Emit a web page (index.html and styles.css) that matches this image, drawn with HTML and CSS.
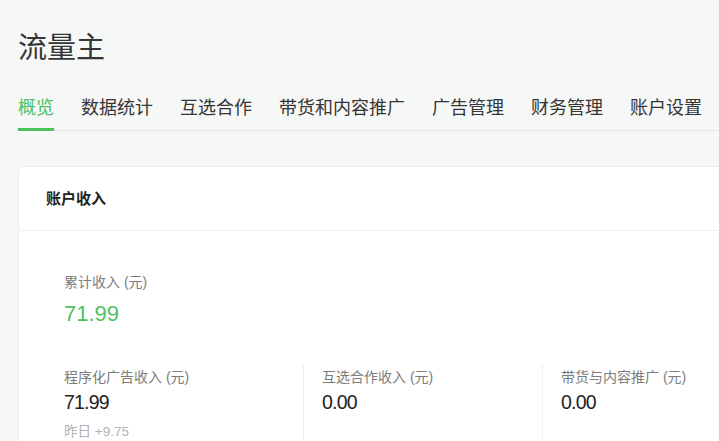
FILE: index.html
```html
<!DOCTYPE html>
<html lang="zh-CN">
<head>
<meta charset="utf-8">
<title>流量主</title>
<link rel="stylesheet" href="styles.css">
</head>
<body>
<div class="page">
  <h1 class="title">流量主</h1>
  <nav class="tabs">
    <a class="tab active">概览</a>
    <a class="tab">数据统计</a>
    <a class="tab">互选合作</a>
    <a class="tab">带货和内容推广</a>
    <a class="tab">广告管理</a>
    <a class="tab">财务管理</a>
    <a class="tab">账户设置</a>
  </nav>
  <section class="card">
    <div class="card-head">账户收入</div>
    <div class="card-body">
      <div class="total">
        <div class="label">累计收入 (元)</div>
        <div class="total-value">71.99</div>
      </div>
      <div class="cols">
        <div class="col">
          <div class="label">程序化广告收入 (元)</div>
          <div class="value">71.99</div>
          <div class="sub">昨日 +9.75</div>
        </div>
        <div class="col">
          <div class="label">互选合作收入 (元)</div>
          <div class="value">0.00</div>
        </div>
        <div class="col">
          <div class="label">带货与内容推广 (元)</div>
          <div class="value">0.00</div>
        </div>
      </div>
    </div>
  </section>
</div>
</body>
</html>
```
FILE: styles.css
```css
html, body {
  margin: 0;
  padding: 0;
  overflow: hidden;
  background: #f6f7f7;
}
body {
  font-family: "Liberation Sans", "Noto Sans CJK SC", sans-serif;
  color: #353535;
}
.page {
  width: 800px;
  padding: 28px 0 0 18px;
}
.title {
  margin: 0;
  font-size: 29px;
  line-height: 40px;
  font-weight: normal;
  color: #353535;
}
.tabs {
  margin-top: 28px;
  display: flex;
  gap: 27px;
  border-bottom: 1px solid #e4e6e6;
}
.tab {
  font-size: 18px;
  line-height: 24px;
  padding-bottom: 8px;
  border-bottom: 3px solid transparent;
  margin-bottom: -1px;
  color: #353535;
  white-space: nowrap;
}
.tab.active {
  color: #4fc15e;
  border-bottom-color: #4fc15e;
}
.card {
  margin-top: 35px;
  background: #fff;
  border: 1px solid #eeefef;
  border-radius: 4px;
}
.card-head {
  height: 63px;
  line-height: 63px;
  padding-left: 27px;
  font-size: 15px;
  font-weight: bold;
  color: #222;
  border-bottom: 1px solid #eeefef;
}
.card-body {
  padding: 41px 0 0 45px;
}
.label {
  font-size: 14px;
  line-height: 20px;
  color: #7c7c7c;
}
.total-value {
  margin-top: 7px;
  font-size: 22px;
  line-height: 30px;
  color: #4fc15e;
}
.cols {
  margin-top: 35px;
  display: grid;
  grid-template-columns: 239px 239px 239px;
}
.col {
  padding: 3px 0 2px 18px;
  border-left: 1px solid #eeefef;
  min-height: 80px;
}
.col:first-child {
  border-left: none;
  padding-left: 0;
}
.value {
  margin-top: 1px;
  font-size: 19.5px;
  line-height: 28px;
  letter-spacing: -0.8px;
  color: #222;
}
.sub {
  margin-top: 6px;
  font-size: 13.5px;
  line-height: 20px;
  color: #b2b2b2;
}
```
